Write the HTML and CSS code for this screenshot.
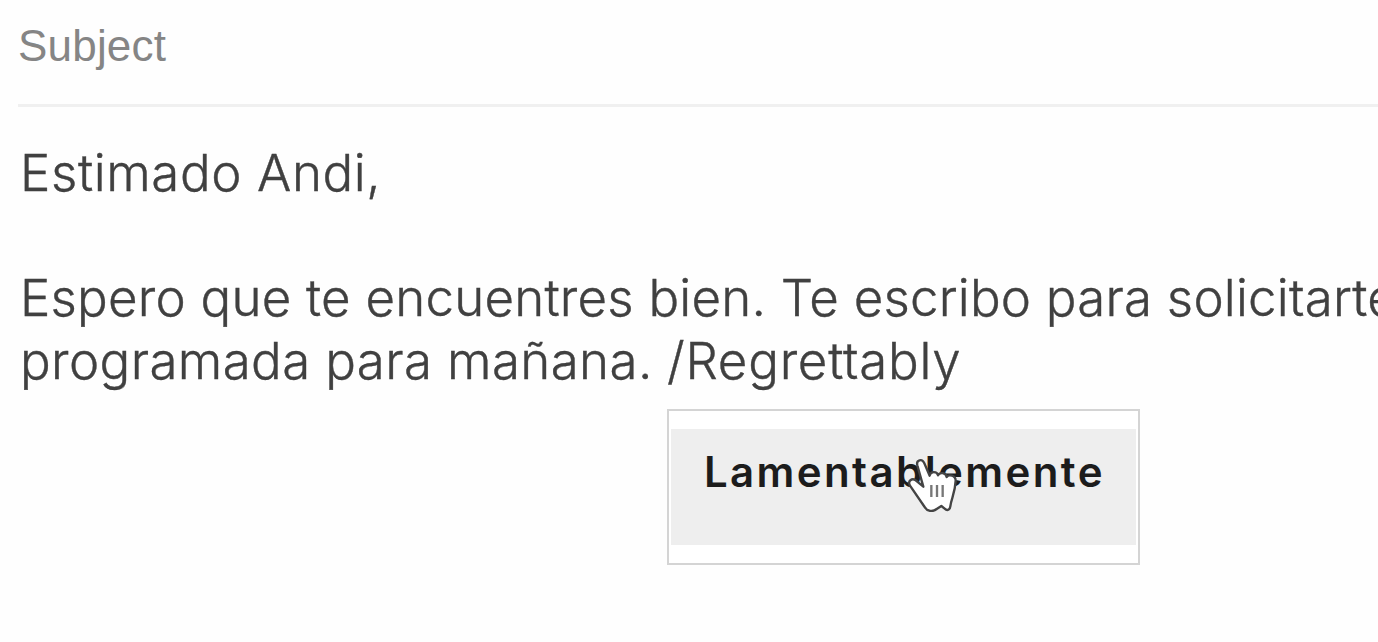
FILE: index.html
```
<!DOCTYPE html>
<html lang="es">
<head>
  <meta charset="UTF-8" />
  <meta name="viewport" content="width=device-width, initial-scale=1.0"/>
  <title>Subject</title>
  <link rel="stylesheet" href="styles.css">
</head>
<body>
  <div class="compose">
    <div class="subject">Subject</div>

    <div class="message">
      <p class="greeting">Estimado Andi,</p>
      <p><br></p>
      <p class="line-one">Espero que te encuentres bien. Te escribo para solicitarte</p>
      <p>programada para mañana. <span class="command">/Regrettably<span class="popup"><span class="option">Lamentablemente<svg class="cursor" viewBox="0 0 180 180" width="60" height="60">
        <path d="M40 40 C36 24 54 18 61 34 L77 71 C79 57 99 57 102 70 C107 59 126 62 128 75 C134 66 155 70 155 86 C153 125 142 138 139 163 C137 176 128 176 122 170 L112 162 L98 171 C86 181 69 178 62 165 L18 101 C10 87 24 77 35 85 L58 104 Z"/>
        <path class="lines" d="M82 99 V135 M99 99 V135 M116 99 V135"/>
      </svg></span></span></span></p>
    </div>
  </div>
</body>
</html>
```

FILE: styles.css
```
* {
  margin: 0;
  padding: 0;
  box-sizing: border-box;
}

body {
  background: #fefefe;
  height: 642px;
  overflow: hidden;
}

.compose {
  margin-left: 18px;
}

.subject {
  height: 107px;
  padding-top: 21px;
  border-bottom: 3px solid #f0f0f0;
  font-family: "Liberation Sans", Arial, sans-serif;
  font-size: 44px;
  letter-spacing: 0.2px;
  line-height: 50px;
  color: #858585;
}

.message {
  padding: 35px 0 0 2px;
  font-family: Inter, sans-serif;
  font-size: 51px;
  font-weight: 300;
  letter-spacing: 0.38px;
  line-height: 62.5px;
  color: #404040;
  -webkit-text-stroke: 0.4px #404040;
  white-space: nowrap;
}

.greeting {
  letter-spacing: 0.6px;
}

.line-one {
  letter-spacing: 0.22px;
}

.command {
  display: inline-block;
  position: relative;
  margin-left: -0.5px;
  letter-spacing: 0.75px;
}

.popup {
  position: absolute;
  top: 79px;
  left: 0;
  width: 473px;
  height: 156px;
  padding: 18px 2px;
  border: 2px solid #d4d4d4;
  background: #fff;
}

.option {
  position: relative;
  display: block;
  height: 116px;
  padding: 17px 0 0 33px;
  background: #eeeeee;
  font-size: 42px;
  font-weight: 600;
  letter-spacing: 2.4px;
  line-height: 52px;
  color: #1c1c1c;
  -webkit-text-stroke: 0;
}

.cursor {
  position: absolute;
  left: 233px;
  top: 23px;
  fill: #fff;
  stroke: #444;
  stroke-width: 7;
  stroke-linejoin: round;
}

.cursor .lines {
  fill: none;
  stroke: #777;
}
```
